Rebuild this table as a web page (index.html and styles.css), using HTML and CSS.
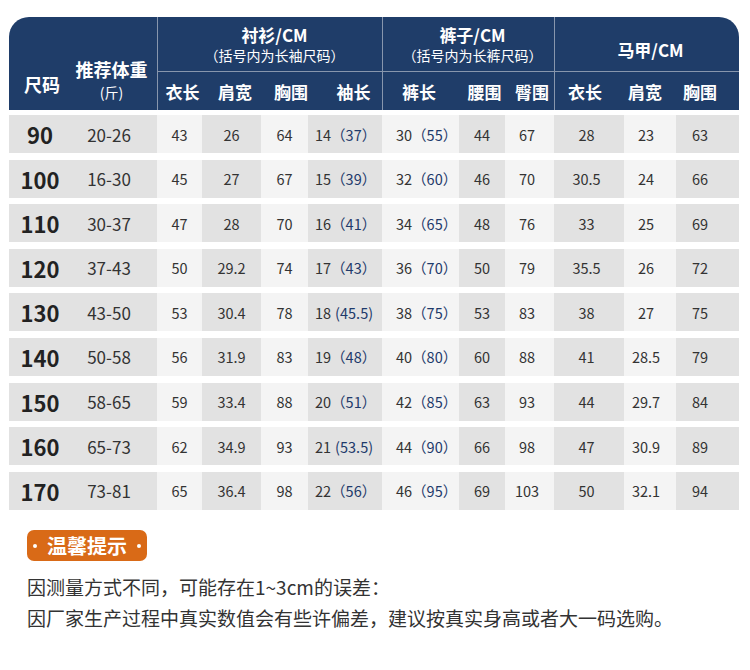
FILE: index.html
```html
<!DOCTYPE html>
<html lang="zh-CN">
<head>
<meta charset="utf-8">
<title>尺码表</title>
<link rel="stylesheet" href="styles.css">
</head>
<body>
<div class="page">
  <div class="chart">
    <div class="head">
      <div class="h-size">尺码</div>
      <div class="h-weight"><span class="hw-main">推荐体重</span><span class="hw-sub">(斤)</span></div>
      <div class="grp grp-shirt"><span class="grp-title">衬衫/CM</span><span class="grp-note">（括号内为长袖尺码）</span></div>
      <div class="grp grp-pants"><span class="grp-title">裤子/CM</span><span class="grp-note">（括号内为长裤尺码）</span></div>
      <div class="grp grp-vest"><span class="grp-title">马甲/CM</span></div>
      <div class="sub first s3">衣长</div>
      <div class="sub s4">肩宽</div>
      <div class="sub s5">胸围</div>
      <div class="sub s6">袖长</div>
      <div class="sub first s7">裤长</div>
      <div class="sub s8">腰围</div>
      <div class="sub s9">臀围</div>
      <div class="sub first s10">衣长</div>
      <div class="sub s11">肩宽</div>
      <div class="sub s12">胸围</div>
    </div>
    <div class="rows">
      <div class="row"><div class="c c1 g">90</div><div class="c c2 g">20-26</div><div class="c c3 l">43</div><div class="c c4 g">26</div><div class="c c5 l">64</div><div class="c c6 g">14<span class="p">（37）</span></div><div class="c c7 l">30<span class="p">（55）</span></div><div class="c c8 g">44</div><div class="c c9 l">67</div><div class="c c10 g">28</div><div class="c c11 l">23</div><div class="c c12 g">63</div></div>
      <div class="row"><div class="c c1 g">100</div><div class="c c2 g">16-30</div><div class="c c3 l">45</div><div class="c c4 g">27</div><div class="c c5 l">67</div><div class="c c6 g">15<span class="p">（39）</span></div><div class="c c7 l">32<span class="p">（60）</span></div><div class="c c8 g">46</div><div class="c c9 l">70</div><div class="c c10 g">30.5</div><div class="c c11 l">24</div><div class="c c12 g">66</div></div>
      <div class="row"><div class="c c1 g">110</div><div class="c c2 g">30-37</div><div class="c c3 l">47</div><div class="c c4 g">28</div><div class="c c5 l">70</div><div class="c c6 g">16<span class="p">（41）</span></div><div class="c c7 l">34<span class="p">（65）</span></div><div class="c c8 g">48</div><div class="c c9 l">76</div><div class="c c10 g">33</div><div class="c c11 l">25</div><div class="c c12 g">69</div></div>
      <div class="row"><div class="c c1 g">120</div><div class="c c2 g">37-43</div><div class="c c3 l">50</div><div class="c c4 g">29.2</div><div class="c c5 l">74</div><div class="c c6 g">17<span class="p">（43）</span></div><div class="c c7 l">36<span class="p">（70）</span></div><div class="c c8 g">50</div><div class="c c9 l">79</div><div class="c c10 g">35.5</div><div class="c c11 l">26</div><div class="c c12 g">72</div></div>
      <div class="row"><div class="c c1 g">130</div><div class="c c2 g">43-50</div><div class="c c3 l">53</div><div class="c c4 g">30.4</div><div class="c c5 l">78</div><div class="c c6 g">18<span class="p half">(45.5)</span></div><div class="c c7 l">38<span class="p">（75）</span></div><div class="c c8 g">53</div><div class="c c9 l">83</div><div class="c c10 g">38</div><div class="c c11 l">27</div><div class="c c12 g">75</div></div>
      <div class="row"><div class="c c1 g">140</div><div class="c c2 g">50-58</div><div class="c c3 l">56</div><div class="c c4 g">31.9</div><div class="c c5 l">83</div><div class="c c6 g">19<span class="p">（48）</span></div><div class="c c7 l">40<span class="p">（80）</span></div><div class="c c8 g">60</div><div class="c c9 l">88</div><div class="c c10 g">41</div><div class="c c11 l">28.5</div><div class="c c12 g">79</div></div>
      <div class="row"><div class="c c1 g">150</div><div class="c c2 g">58-65</div><div class="c c3 l">59</div><div class="c c4 g">33.4</div><div class="c c5 l">88</div><div class="c c6 g">20<span class="p">（51）</span></div><div class="c c7 l">42<span class="p">（85）</span></div><div class="c c8 g">63</div><div class="c c9 l">93</div><div class="c c10 g">44</div><div class="c c11 l">29.7</div><div class="c c12 g">84</div></div>
      <div class="row"><div class="c c1 g">160</div><div class="c c2 g">65-73</div><div class="c c3 l">62</div><div class="c c4 g">34.9</div><div class="c c5 l">93</div><div class="c c6 g">21<span class="p half">(53.5)</span></div><div class="c c7 l">44<span class="p">（90）</span></div><div class="c c8 g">66</div><div class="c c9 l">98</div><div class="c c10 g">47</div><div class="c c11 l">30.9</div><div class="c c12 g">89</div></div>
      <div class="row"><div class="c c1 g">170</div><div class="c c2 g">73-81</div><div class="c c3 l">65</div><div class="c c4 g">36.4</div><div class="c c5 l">98</div><div class="c c6 g">22<span class="p">（56）</span></div><div class="c c7 l">46<span class="p">（95）</span></div><div class="c c8 g">69</div><div class="c c9 l">103</div><div class="c c10 g">50</div><div class="c c11 l">32.1</div><div class="c c12 g">94</div></div>
    </div>
  </div>
  <div class="tips">
    <div class="badge"><span class="dot"></span><span class="badge-text">温馨提示</span><span class="dot"></span></div>
    <p class="tip-text">因测量方式不同，可能存在1~3cm的误差：<br>因厂家生产过程中真实数值会有些许偏差，建议按真实身高或者大一码选购。</p>
  </div>
</div>
</body>
</html>
```

FILE: styles.css
```css
* {
  box-sizing: border-box;
}

html, body {
  margin: 0;
  padding: 0;
  background: #ffffff;
}

body {
  font-family: "Noto Sans CJK SC", "Noto Sans", sans-serif;
  color: #333333;
}

.page {
  width: 750px;
  height: 670px;
  padding: 17px 11px 0 9px;
}

.chart {
  width: 730px;
}

.head {
  display: grid;
  grid-template-columns: 62px 86px 45px 59px 47px 74px 77px 46px 49px 70px 52px 63px;
  grid-template-rows: 55px 38px;
  background: #1f3d69;
  color: #ffffff;
  border-radius: 20px 20px 0 0;
  font-weight: 700;
}

.h-size {
  grid-row: 1 / 3;
  grid-column: 1;
  display: flex;
  align-items: flex-end;
  justify-content: center;
  font-size: 18px;
  line-height: 24px;
  padding-bottom: 14px;
  padding-left: 4px;
}

.h-weight {
  grid-row: 1 / 3;
  grid-column: 2;
  display: flex;
  flex-direction: column;
  align-items: center;
  justify-content: flex-end;
  gap: 2px;
  padding-bottom: 8px;
  padding-right: 5px;
}

.hw-main {
  font-size: 18px;
  line-height: 22px;
}

.hw-sub {
  font-size: 14px;
  line-height: 20px;
  font-weight: 400;
}

.grp {
  grid-row: 1;
  display: flex;
  flex-direction: column;
  align-items: center;
  justify-content: center;
  border-left: 1px solid #8796ad;
  border-bottom: 1px solid #8796ad;
}

.grp-shirt {
  grid-column: 3 / 7;
  padding-left: 9px;
  padding-top: 2px;
}

.grp-pants {
  grid-column: 7 / 10;
  padding-left: 8px;
  padding-top: 2px;
}

.grp-vest {
  grid-column: 10 / 13;
  padding-left: 7px;
  padding-top: 10px;
}

.grp-title {
  font-size: 17px;
  line-height: 21px;
}

.grp-note {
  font-size: 14px;
  line-height: 21px;
  font-weight: 400;
}

.sub {
  grid-row: 2;
  display: flex;
  align-items: center;
  justify-content: center;
  font-size: 17px;
  white-space: nowrap;
}

.sub.first {
  border-left: 1px solid #8796ad;
}

.s3 { padding-left: 5px; }
.s4 { padding-left: 7px; }
.s5 { padding-left: 13px; }
.s6 { padding-left: 17px; }
.s7 { padding-right: 4px; }
.s8 { padding-left: 5px; }
.s9 { padding-left: 5px; }
.s10 { padding-right: 9px; }
.s11 { padding-right: 10px; }
.s12 { padding-right: 15px; }

.rows {
  display: flex;
  flex-direction: column;
  gap: 6.6px;
  padding-top: 5px;
}

.row {
  display: grid;
  grid-template-columns: 62px 86px 45px 59px 47px 74px 77px 46px 49px 70px 52px 63px;
  height: 38px;
}

.c {
  display: flex;
  align-items: center;
  justify-content: center;
  font-size: 14.5px;
  color: #333333;
  white-space: nowrap;
}

.g {
  background: #e2e2e2;
}

.l {
  background: #f4f4f4;
}

.c1 {
  font-size: 22px;
  font-weight: 700;
  color: #222222;
}

.c2 {
  font-size: 17px;
  padding-right: 10px;
}

.c6 {
  justify-content: flex-start;
  padding-left: 7px;
}

.c7 {
  justify-content: flex-start;
  padding-left: 14px;
}

.c9 { padding-right: 5px; }
.c10 { padding-right: 5px; }
.c11 { padding-right: 8px; }
.c12 { padding-right: 15px; }

.p {
  color: #1e3a6b;
}

.p.half {
  margin-left: 4px;
}

.tips {
  padding: 19px 0 0 18px;
}

.badge {
  display: inline-flex;
  align-items: center;
  gap: 10px;
  height: 31px;
  padding: 0 6px;
  background: #d96a17;
  border-radius: 7px;
  color: #ffffff;
}

.badge-text {
  font-size: 20px;
  line-height: 31px;
  font-weight: 700;
}

.dot {
  width: 4px;
  height: 4px;
  border-radius: 50%;
  background: #ffffff;
}

.tip-text {
  margin: 10px 0 0 0;
  font-size: 19px;
  line-height: 31px;
  color: #333333;
}
```
